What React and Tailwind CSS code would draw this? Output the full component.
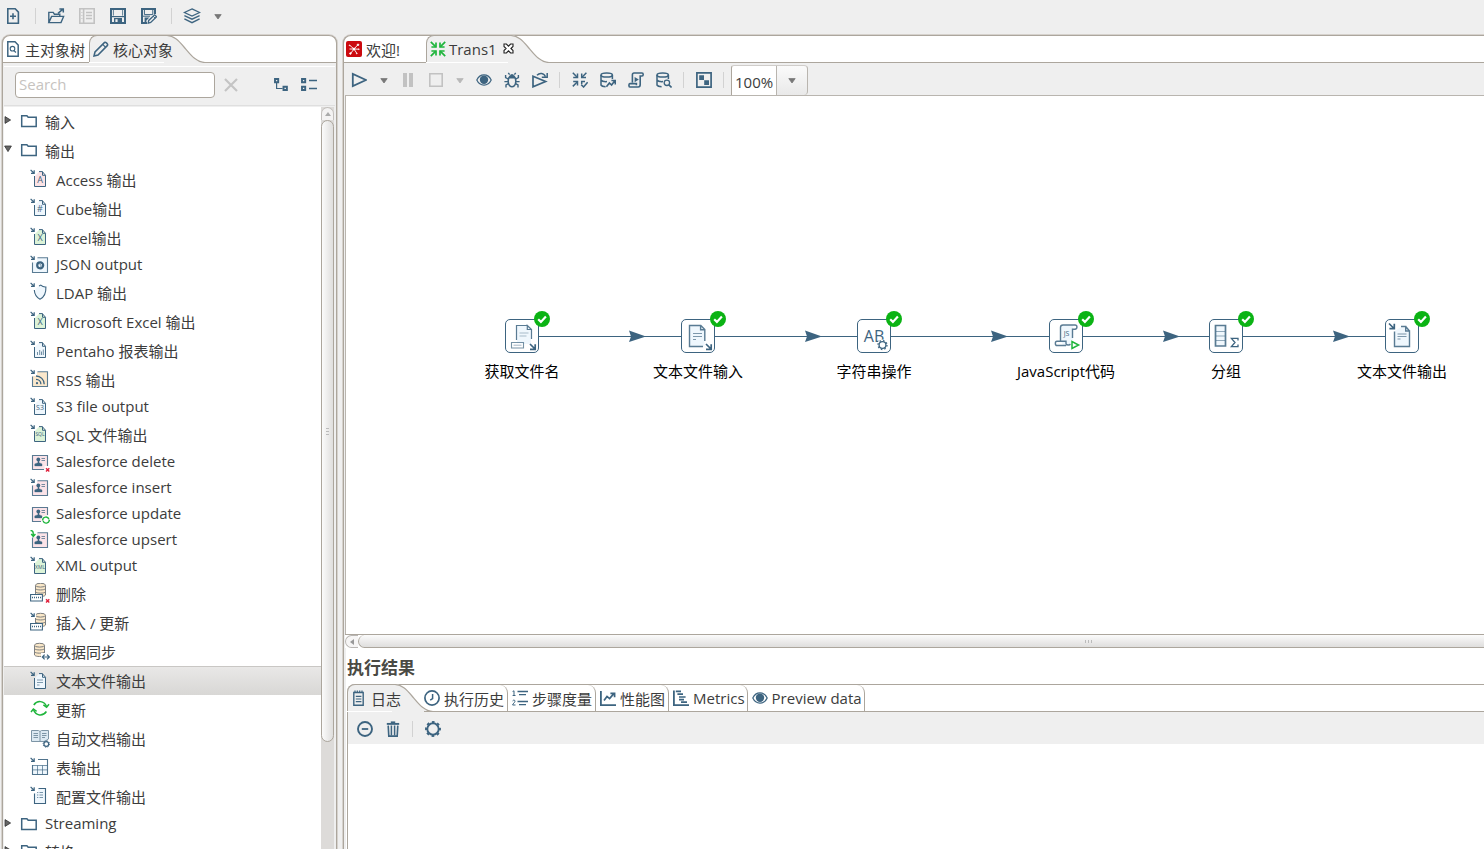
import React from "react";

const INK = "#3d6480";
const PALE = "#eff7fd";
const GREEN = "#1fb53c";

function Svg({ w = 16, h = 16, children, className = "" }) {
  return (
    <svg
      width={w}
      height={h}
      viewBox={`0 0 ${w} ${h}`}
      fill="none"
      stroke={INK}
      strokeWidth="1.6"
      className={`shrink-0 ${className}`}
      aria-hidden="true"
    >
      {children}
    </svg>
  );
}

/* ---------- toolbar icons ---------- */

const NewIcon = () => (
  <Svg>
    <path d="M2.8.8h7.4l3.2 3.3v11.1H2.8z" />
    <path d="M5 8.2h6M8 5.2v6" />
  </Svg>
);
const OpenIcon = () => (
  <Svg w={18}>
    <path d="M1.8 14.6V4.4h4.4l1.2 1.8h5.4v2.2M1.8 14.6l2.8-6.2h12l-2.6 6.2z" strokeWidth="1.4" />
    <path d="M11 5.4l4.6-4M12.4.9h3.9v3.6" strokeWidth="1.5" />
  </Svg>
);
const ListIcon = () => (
  <Svg>
    <g stroke="#c2c2c2">
      <path d="M.8.8h14.4v14.4H.8zM4.6 1v14" />
      <path d="M7 4.5h6M7 7.5h6M7 10.5h6" strokeWidth="1.3" />
      <path d="M2.4 4.5h1M2.4 7.5h1M2.4 10.5h1" strokeWidth="1" />
    </g>
  </Svg>
);
const SaveIcon = () => (
  <Svg>
    <path d="M1 1h14v14H1z" strokeWidth="2" />
    <path d="M2 8.6h12" strokeWidth="1.2" />
    <path d="M3.4 2v5.6M12.6 2v5.6" strokeWidth=".8" />
    <path d="M4 10h8v5H4z" fill={INK} stroke="none" />
    <path d="M5.4 11.2h2.2v2.8H5.4z" fill="#efefef" stroke="none" />
  </Svg>
);
const SaveAsIcon = () => (
  <Svg>
    <path d="M14 6V1H1v14h5" strokeWidth="2" />
    <path d="M3.4 2v4.6h8.4V2M1 8.2h8" strokeWidth="1" />
    <path d="M3.6 9.6h4.8l-3 3v2.8H3.6z" fill={INK} stroke="none" />
    <path d="M7.2 15.2l.5-2.8 6-5.6 1.9 2-5.9 5.7z" fill="#efefef" strokeWidth="1.3" />
    <path d="M12.2 8.2l1.9 2" strokeWidth="1" />
  </Svg>
);
const LayersIcon = () => (
  <Svg w={18}>
    <g strokeWidth="1.3">
      <path d="M9 .9l7.6 3.6L9 8.1 1.4 4.5z" />
      <path d="M1.4 7.6L9 11.2l7.6-3.6M1.4 10.9L9 14.7l7.6-3.8" />
    </g>
  </Svg>
);
const Caret = ({ color = "#777" }) => (
  <Svg w={8} h={6} className="mt-px">
    <path d="M.8.6h6.4L4 5z" fill={color} stroke={color} strokeWidth=".8" />
  </Svg>
);
const Play = () => (
  <Svg>
    <path d="M1.8 1.9v12.2L15 8z" strokeWidth="1.8" />
  </Svg>
);
const Pause = () => (
  <Svg>
    <path d="M3 1h4v14H3zM9 1h4v14H9z" fill="#c2c2c2" stroke="none" />
  </Svg>
);
const Stop = () => (
  <Svg>
    <path d="M1.8 1.8h12.4v12.4H1.8z" stroke="#c2c2c2" strokeWidth="1.6" />
  </Svg>
);
const Eye = () => (
  <Svg>
    <path d="M.8 8C2.4 4.6 5 2.9 8 2.9S13.6 4.6 15.200 8C13.6 11.4 11 13.1 8 13.1S2.4 11.4.8 8z" strokeWidth="1.2" />
    <circle cx="8" cy="7.8" r="4.2" fill={INK} stroke="none" />
  </Svg>
);
const Bug = () => (
  <Svg>
    <path d="M5 5.6h6c1 2 1.4 6-.6 8-1.4 1.3-3.4 1.3-4.8 0-2-2-1.6-6-.6-8z" />
    <path d="M5.4 5.200C5.4 1.8 10.6 1.8 10.6 5.200z" fill={INK} strokeWidth="1" />
    <path d="M5.6 2.600L4.3.8M10.4 2.600L11.7.8M4.2 7L1.6 5.600V3M11.8 7l2.6-1.400V3M4 9.600H.4M12 9.600h3.600M4.4 11.600L2 13v2.400M11.6 11.600L14 13v2.400" strokeWidth="1.4" />
  </Svg>
);
const Replay = () => (
  <Svg>
    <path d="M1 4.200v10.600l12.600-5.300z" strokeWidth="1.7" />
    <path d="M5 3.200C7.500.6 12 .8 13.400 4.800" strokeWidth="1.5" />
    <path d="M9.800 5.300h5.400V.9" strokeWidth="1.5" />
  </Svg>
);
const Verify = () => (
  <Svg>
    <g strokeWidth="1.5">
      <path d="M.8.8l4.4 4.4M14.4.8L10 5.2M.8 14.4L5.2 10" />
      <path d="M5.5 1.4v4.1H1.2M9.7 1.4v4.1H14M5.5 13.6v-4H1.2M9.7 12v-2.400H13" />
      <path d="M9.200 12.600l2.400 2.400 4-4.800" />
    </g>
  </Svg>
);
const DbPath = () => (
  <>
    <ellipse cx="6.7" cy="3" rx="5.7" ry="2.1" />
    <path d="M1 3v10c.6 1 2.4 1.6 4.6 1.7M12.4 3v4M1 8c.8 1.2 3 1.8 6 1.6" />
  </>
);
const DbImpact = () => (
  <Svg>
    <g strokeWidth="1.5"><DbPath /></g>
    <path d="M6.4 14.8l3-3.8 2.2 2 3-4M11.4 8.500h3.900v4" />
  </Svg>
);
const SqlScript = () => (
  <Svg>
    <path d="M4.4 10.600V2.800C4.400 1.600 5 1 6 1h8c1.600 0 1.600 3 0 3h-1.800v8.600c0 1.600-.8 2.400-2 2.400H1.800C.6 15 .6 11.600 1.800 11.600h6.600v1.600" />
    <path d="M6.600 5l4.200 2.600-4.200 2.600z" fill={INK} stroke="none" />
  </Svg>
);
const DbExplore = () => (
  <Svg>
    <g strokeWidth="1.5"><DbPath /></g>
    <circle cx="10.900" cy="10.800" r="2.700" strokeWidth="1.3" />
    <path d="M12.900 12.900l2.700 2.600" />
  </Svg>
);
const ResultsPane = () => (
  <Svg>
    <path d="M.9.9h14.200v14.200H.9z" strokeWidth="1.7" />
    <path d="M3.200 3.200H8V8H3.200zM8.200 8.200H13V13H8.200z" fill={INK} stroke="none" />
  </Svg>
);
const ClearX = () => (
  <Svg>
    <path d="M2 2l12 12M14 2L2 14" stroke="#c4c4c4" strokeWidth="2.2" />
  </Svg>
);
const ExpandTree = () => (
  <Svg>
    <path d="M2 2h3.200v3.200H2zM10.500 9.800h3.400V13h-3.400z" strokeWidth="1.9" />
    <path d="M3.600 6v5.500h6" strokeWidth="1.2" />
  </Svg>
);
const CollapseTree = () => (
  <Svg>
    <path d="M1 2h3.200v3.200H1zM1 9.800h3.200V13H1z" strokeWidth="1.9" />
    <path d="M8 3.600h8M8 11.400h8" strokeWidth="1.5" />
  </Svg>
);

/* ---------- tab icons ---------- */

const DocSearch = () => (
  <Svg w={12}>
    <path d="M.8.8h7.2l3.2 3.3v11.1H.8z" strokeWidth="1.5" />
    <circle cx="5.500" cy="7.700" r="2.300" strokeWidth="1.1" />
    <path d="M7.100 9.600l1.800 1.900" strokeWidth="1.3" />
  </Svg>
);
const Pencil = () => (
  <Svg>
    <path d="M1 15l1-4L11.600 1.400c.8-.8 3.800 1.800 2.900 3L5 14z" strokeWidth="1.5" />
    <path d="M9.700 3.400l3 3" strokeWidth="1.2" />
  </Svg>
);
const Welcome = () => (
  <Svg>
    <rect width="16" height="16" rx="2" fill="#cb0a0f" stroke="none" />
    <g stroke="#fff" strokeWidth=".9">
      <path d="M8 8L4 4.500M8 8l3.700-4M8 8l4.500.2M8 8l2.600 4M8 8l-3 4M8 8H3.500" />
      <circle cx="8" cy="8" r="1" fill="#fff" />
      <circle cx="12" cy="3.800" r=".8" fill="#fff" />
      <circle cx="4.400" cy="12.500" r=".8" fill="#fff" />
      <circle cx="3.600" cy="4.300" r=".4" fill="#fff" />
      <circle cx="12.800" cy="8.200" r=".4" fill="#fff" />
      <circle cx="10.800" cy="12.500" r=".4" fill="#fff" />
    </g>
  </Svg>
);
const TransIcon = () => (
  <Svg>
    <g stroke={GREEN} strokeWidth="1.7">
      <path d="M.8.8l5 5M15.200.8l-5 5M.8 15.200l5-5M15.200 15.200l-5-5" />
      <path d="M6 1.600V6H1.400M10 1.600V6h4.600M6 14.400V10H1.400M10 14.400V10h4.600" />
    </g>
  </Svg>
);
const CloseIcon = () => (
  <Svg w={11} h={11}>
    <path d="M1 1h2.400l2.100 2.200L7.600 1H10v2.400L7.900 5.500 10 7.600V10H7.600L5.500 7.800 3.400 10H1V7.600l2.100-2.100L1 3.400z" stroke="#222" strokeWidth="1.1" fill="#fff" />
  </Svg>
);
const LogIcon = () => (
  <Svg w={14}>
    <path d="M1.800 2.500h9.400v12.700H1.800z" strokeWidth="1.4" />
    <path d="M3 .5v2.600M5.300.5v2.600M7.700.5v2.600M10 .5v2.600" strokeWidth="1.2" />
    <path d="M3.800 6.400h5.600M3.800 9h5.600M3.800 11.600h5.600" strokeWidth="1.2" />
  </Svg>
);
const Clock = () => (
  <Svg>
    <circle cx="8" cy="8" r="7.100" strokeWidth="1.7" />
    <path d="M8.600 4v4.600l-2.400 1.600" strokeWidth="1.5" />
  </Svg>
);
const Steps = () => (
  <Svg>
    <path d="M5.500 1.500H16M7 4.600h7M5.500 11.500H16M7 14.600h7" strokeWidth="1.3" />
    <path d="M.6 1.500L2 .8v4.800M.6 5.500h2.900M.6 10.900c.6-1.200 2.600-1 2.400.4C2.800 12.600.8 13.600.6 15h2.900" strokeWidth="1" />
  </Svg>
);
const Perf = () => (
  <Svg>
    <path d="M.9 1v14.100H16" strokeWidth="1.8" />
    <path d="M4 10.400l3-4 2.600 2.200 4.200-5M10.400 3.400h4.200v3.800" strokeWidth="1.7" />
  </Svg>
);
const MetricsIcon = () => (
  <Svg>
    <path d="M.9.500v14.600H16" strokeWidth="1.8" />
    <path d="M2.800 1.400h5.200M4.400 4.200h5.600M6 7h6.600M6 9.600h5M8 12.200h6" strokeWidth="1.7" />
  </Svg>
);
const MinusCircle = () => (
  <Svg>
    <circle cx="8" cy="8" r="7" strokeWidth="1.9" />
    <path d="M4.800 8h6.400" strokeWidth="1.8" />
  </Svg>
);
const Trash = () => (
  <Svg>
    <path d="M1.800 2.900h12.400" strokeWidth="1.9" />
    <path d="M5.800 1.200h4.400" />
    <path d="M3.200 4.600l.6 10.500h8.400l.6-10.500" />
    <path d="M6.400 4.600v10M9.600 4.600v10" strokeWidth="1.5" />
  </Svg>
);
const Gear = () => (
  <Svg>
    <circle cx="8" cy="8" r="5.700" strokeWidth="1.900" />
    <circle cx="8" cy="8" r="7" strokeWidth="1.900" strokeDasharray="2.700 2.800" strokeDashoffset="1.350" />
  </Svg>
);

/* ---------- tree icons ---------- */

const Folder = () => (
  <Svg w={18} h={14} className="mb-px">
    <path d="M1.700 12.500V1.700h5.200l1.300 1.500h8v9.300z" strokeWidth="1.5" />
  </Svg>
);
const InArrow = () => <path d="M.6.800l3.200 3.200M4.200 1.200v3.200H1" strokeWidth="1.2" />;
const Cross = () => <path d="M16 16.200l3.300 3.300M19.300 16.200L16 19.500" stroke="#e0213c" strokeWidth="1.4" />;
const Doc = ({ fill = PALE, children }) => (
  <>
    <path d="M5 7l4-4.300h2.600L15.400 6v11.500H5z" fill={fill} stroke="none" />
    <path d="M4.500 7v10.500h11V6.300h-3V2.600H9M12.500 2.800l3 3.500" strokeWidth="1" />
    <InArrow />
    {children}
  </>
);
const Glyph = ({ children, size = 9, y = 14 }) => (
  <text x="10" y={y} fontSize={size} textAnchor="middle" fill={INK} stroke="none" fontFamily="Open Sans, sans-serif">
    {children}
  </text>
);
const Square = ({ fill, children }) => (
  <>
    <path d="M3 7h4V3h10.500v14.500H3z" fill={fill} stroke="none" />
    <path d="M7.500 2.700h10v14.800h-15V7.500" strokeWidth="1.1" opacity=".85" />
    {children}
  </>
);
const Person = () => (
  <>
    <circle cx="8.300" cy="7.500" r="1.900" fill={INK} stroke="none" />
    <path d="M8 8.500h1v2.200l3 1.200v2H4.800v-2L8 10.700z" fill={INK} strokeWidth=".4" />
    <path d="M11.500 6.500H15M11.500 8.500H15" strokeWidth="1" opacity=".7" />
  </>
);
const Cylinder = ({ x = 0, y = 0 }) => (
  <g transform={`translate(${x} ${y})`} stroke="#7d7f80" strokeWidth="1">
    <path d="M5.500 3.500v9.500c1 2 9 2 10 0V3.500z" fill="#fbe8c8" />
    <ellipse cx="10.500" cy="3.200" rx="5" ry="1.900" fill="#fbe8c8" />
    <path d="M5.500 6.600c1 1.800 9 1.800 10 0M5.500 9.800c1 1.800 9 1.800 10 0" />
  </g>
);
const DashBox = () => (
  <>
    <path d="M.6 11.500h11.800v6.500H.6z" fill="#fff" strokeWidth="1.1" />
    <path d="M2 14.600h9.200" strokeWidth="1.5" strokeDasharray="1 1" />
  </>
);

const GLYPHS = {
  access: <Doc fill="#fbe3e6"><Glyph>A</Glyph></Doc>,
  cube: <Doc><Glyph>#</Glyph></Doc>,
  excel: <Doc fill="#dcf3d8"><Glyph>X</Glyph></Doc>,
  s3: <Doc><Glyph size={7} y={13}>S3</Glyph></Doc>,
  sql: <Doc fill="#dcf3d8"><Glyph size={5} y={12}>SQL</Glyph></Doc>,
  xml: <Doc fill="#dcf3d8"><Glyph size={5} y={13}>XML</Glyph></Doc>,
  text: <Doc><path d="M7 9h6M7 11.500h6M7 14h2.500" strokeWidth=".9" opacity=".7" /></Doc>,
  report: <Doc><path d="M7.500 15v-3M9.700 15v-5M11.500 15v-3.500M13.300 15V9.500" strokeWidth=".9" opacity=".8" /></Doc>,
  json: (
    <Square fill={PALE}>
      <circle cx="10.200" cy="10.300" r="3" strokeWidth="2.200" />
      <path d="M9.500 8.800l1.400 1.400v2" strokeWidth=".8" />
      <InArrow />
    </Square>
  ),
  ldap: (
    <>
      <path d="M5.500 7C8 5 9 3.500 10 3l5.500 1.500v4c0 4-2.500 7-5.500 8.500-2.500-1.500-4.500-4-4.500-10z" fill={PALE} stroke="none" />
      <path d="M4.300 8c.3 4.500 2.600 7.600 5.700 9.200 3.600-1.700 6.200-5 5.900-12.200-1.800.2-3.400-.3-5.100-1.900L9 4" strokeWidth="1.1" />
      <InArrow />
    </>
  ),
  rss: (
    <Square fill="#fbe8cc">
      <circle cx="7" cy="14.200" r="1.100" fill={INK} stroke="none" />
      <path d="M6 10.300c2.800 0 4.900 2 4.900 4.900M6 7c4.600 0 8.200 3.600 8.200 8.200" strokeWidth="1.300" />
      <InArrow />
    </Square>
  ),
  sfDelete: (
    <>
      <path d="M2.600 3.500h15V14h-3v3.500h-12z" fill="#fbe3e8" stroke="none" />
      <path d="M17.500 14V3.500h-15v14H14" strokeWidth="1.1" opacity=".85" />
      <Person />
      <Cross />
    </>
  ),
  sfInsert: <Square fill="#fbe3e8"><Person /><InArrow /></Square>,
  sfUpdate: (
    <>
      <path d="M2.600 3.500h15V12h-4v5.500h-11z" fill="#fbe3e8" stroke="none" />
      <path d="M17.500 11V3.500h-15v14H11" strokeWidth="1.1" opacity=".85" />
      <Person />
      <circle cx="16" cy="16" r="4.600" fill="#fff" stroke="none" />
      <path d="M12.600 16.500c0-4 5.300-4.600 6.300-1.200M19.400 15.700c0 4-5.300 4.600-6.300 1.200" stroke={GREEN} strokeWidth="1.4" />
    </>
  ),
  sfUpsert: (
    <Square fill="#fbe3e8">
      <Person />
      <path d="M.5.600C3 .4 3.300 2 3.300 5.500M1.200 4l2.100 2.400L5.400 4" stroke={GREEN} strokeWidth="1.4" />
    </Square>
  ),
  remove: <><Cylinder y={-1} /><DashBox /><Cross /></>,
  insertUpdate: (
    <>
      <Cylinder y={0} />
      <path d="M0 0h6v6H0z" fill="#fff" stroke="none" />
      <DashBox />
      <InArrow />
    </>
  ),
  sync: (
    <>
      <Cylinder x={-1} y={1} />
      <path d="M11 12h9v7h-9z" fill="#fff" stroke="none" />
      <path d="M12.300 16h7M14.600 13.600L12.300 16l2.300 2.400M17 13.600l2.300 2.400-2.300 2.400" strokeWidth="1.2" />
    </>
  ),
  update: (
    <g stroke={GREEN} strokeWidth="1.500">
      <path d="M3.800 6c3.400-5 10.400-4.400 12.600 1.200M16.400 12.500c-3.400 5-10.600 4.500-12.800-1.400" />
      <path d="M13.400 5.800l3.200 2.500L19 5.200M1 13l2.400-3 3.200 2.300" />
    </g>
  ),
  autodoc: (
    <>
      <path d="M1.500 2.500h7l1.500 1 1.500-1h7V11l-4 2.500h-13zM10 3.500V14" fill="#dce9f2" stroke="#7d95a6" strokeWidth="1" />
      <path d="M3.500 5.500H8M3.500 7.500H8M3.500 9.500H8M12 5.500h4.500M12 7.500h4.500M12 9.500h3" stroke="#7d95a6" strokeWidth="1" />
      <circle cx="16.300" cy="16" r="2.400" fill="#fff" strokeWidth="1.200" />
      <circle cx="16.300" cy="16" r="3.200" strokeWidth="1" strokeDasharray="1.200 1.300" />
    </>
  ),
  table: (
    <>
      <path d="M3 8h14.500v9.500H3z" fill={PALE} stroke="none" />
      <path d="M2.500 8.500h15M2.500 12.900h15M7.500 8.500v9M12.500 8.500v9" strokeWidth=".9" opacity=".75" />
      <path d="M8 2.500h9.500v15h-15V8" strokeWidth="1.1" opacity=".9" />
      <InArrow />
    </>
  ),
  config: (
    <>
      <path d="M5 7h3V2.600h7.500v14.900H5z" fill={PALE} stroke="none" />
      <path d="M8.500 2.500h7v15H4.500V7.500" strokeWidth="1.1" />
      <path d="M7 6.500h1.300M9.500 6.500H13M7 9h1.300M9.500 9H13M7 11.500h1.300M9.500 11.500H13" strokeWidth=".9" opacity=".75" />
      <InArrow />
    </>
  ),
};

/* rows without Chinese text are a little shorter */
const TREE = [
  { label: "输入", folder: "closed" },
  { label: "输出", folder: "open" },
  { label: "Access 输出", icon: "access" },
  { label: "Cube输出", icon: "cube" },
  { label: "Excel输出", icon: "excel" },
  { label: "JSON output", icon: "json", short: true },
  { label: "LDAP 输出", icon: "ldap" },
  { label: "Microsoft Excel 输出", icon: "excel" },
  { label: "Pentaho 报表输出", icon: "report" },
  { label: "RSS 输出", icon: "rss" },
  { label: "S3 file output", icon: "s3", short: true },
  { label: "SQL 文件输出", icon: "sql" },
  { label: "Salesforce delete", icon: "sfDelete", short: true },
  { label: "Salesforce insert", icon: "sfInsert", short: true },
  { label: "Salesforce update", icon: "sfUpdate", short: true },
  { label: "Salesforce upsert", icon: "sfUpsert", short: true },
  { label: "XML output", icon: "xml", short: true },
  { label: "删除", icon: "remove" },
  { label: "插入 / 更新", icon: "insertUpdate" },
  { label: "数据同步", icon: "sync" },
  { label: "文本文件输出", icon: "text", selected: true },
  { label: "更新", icon: "update" },
  { label: "自动文档输出", icon: "autodoc" },
  { label: "表输出", icon: "table" },
  { label: "配置文件输出", icon: "config" },
  { label: "Streaming", folder: "closed", short: true },
  { label: "转换", folder: "closed" },
];

function TreeRow({ item }) {
  const height = item.short ? "h-[26px]" : "h-[29px]";
  const textShift = item.short ? "pb-[2px]" : "";
  const look = item.selected
    ? "border-t border-[#c9c7c4] bg-linear-to-b from-[#e9e8e7] to-[#d8d7d5]"
    : "";
  return (
    <li>
      <button
        type="button"
        className={`flex w-full items-center text-left whitespace-nowrap ${height} ${look} ${item.folder ? "" : "gap-[6px] pl-[26px]"}`}
      >
        {item.folder ? (
          <>
            <span className="mb-[3px] flex w-4">
              <Svg w={8} h={8}>
                <path
                  d={item.folder === "open" ? "M.6 1h6.800L4 6.600z" : "M1 .6v6.800L6.600 4z"}
                  fill="#666"
                  stroke="#333"
                  strokeWidth=".8"
                />
              </Svg>
            </span>
            <Folder />
            <span className={`pl-[7px] ${textShift}`}>{item.label}</span>
          </>
        ) : (
          <>
            <Svg w={20} h={20} className={item.short ? "" : "mb-px"}>{GLYPHS[item.icon]}</Svg>
            <span className={textShift}>{item.label}</span>
          </>
        )}
      </button>
    </li>
  );
}

/* ---------- shared chrome ---------- */

function Tool({ label, width = "w-7", disabled, children }) {
  return (
    <button type="button" aria-label={label} disabled={disabled} className={`flex h-7 shrink-0 items-center justify-center ${width}`}>
      {children}
    </button>
  );
}

const Divider = ({ className }) => <span className={`h-4 w-px shrink-0 bg-[#d2d2d2] ${className}`} />;

function ActiveTab({ className = "", children }) {
  return (
    <div role="tab" aria-selected="true" tabIndex={0} className={`relative flex h-full shrink-0 items-center whitespace-nowrap ${className}`}>
      <span className="absolute inset-y-0 right-[41px] left-0 rounded-tl-lg border-t border-l border-[#aca69d] bg-[#efefef]" />
      <Svg w={41} h={28} className="absolute top-0 right-0">
        <path d="M0 0h4C10 1 14 5 20 12s12 15 21 15.500V28H0z" fill="#efefef" stroke="none" />
        <path d="M0 .5h3C10 1 14 5 20 12s12 15.500 21 15.500" stroke="#aca69d" strokeWidth="1.200" />
      </Svg>
      <span className="relative flex items-center">{children}</span>
    </div>
  );
}

function Tab({ className = "", children }) {
  return (
    <button type="button" role="tab" aria-selected="false" className={`flex h-full shrink-0 items-center border-b border-[#aca69d] whitespace-nowrap ${className}`}>
      {children}
    </button>
  );
}

/* ---------- canvas ---------- */

const OutArrow = () => <path d="M25 25l5 5M30.200 25.200v5.200H25" strokeWidth="1.700" />;

const STEP_ART = {
  files: (
    <>
      <path d="M12 6.500h10l4 4V25H12z" fill={PALE} stroke="none" />
      <path d="M11.500 21V6.500h11M26.500 20v-9.500h-4.200V6.500l4.200 4" strokeWidth="1.200" opacity=".85" />
      <path d="M14.500 14h9M14.500 17h7" strokeWidth=".8" opacity=".5" />
      <path d="M6.500 23.500h12v5.500h-12z" fill="#fff" strokeWidth="1.100" opacity=".7" />
      <path d="M8.500 26.200h8" strokeWidth=".8" opacity=".6" />
      <OutArrow />
    </>
  ),
  textIn: (
    <>
      <path d="M8.500 6.500h11l4 4v17h-15z" fill={PALE} stroke="none" />
      <path d="M22 27.500H8.500v-21h11.300l4 4V22M19.600 6.500v4.200h4.200" strokeWidth="1.400" opacity=".85" />
      <path d="M12 14.500h9M12 17.500h9M12 20.500h3" strokeWidth="1" opacity=".65" />
      <path d="M24 23h8v9h-8z" fill="#fff" stroke="none" />
      <OutArrow />
    </>
  ),
  string: (
    <>
      <text x="17" y="23" fontSize="16" textAnchor="middle" fill={INK} stroke="none" fontFamily="Open Sans, sans-serif">AB</text>
      <circle cx="25.500" cy="26" r="5.500" fill="#fff" stroke="none" />
      <circle cx="25.500" cy="26" r="3.400" strokeWidth="1.300" />
      <circle cx="25.500" cy="26" r="4.500" strokeWidth="1.300" strokeDasharray="1.500 2.030" />
    </>
  ),
  script: (
    <>
      <path d="M12 22V8.500C12 7 13 6 14.500 6H24v20H14z" fill={PALE} stroke="none" />
      <path d="M11.500 21.500V8.600C11.500 7 12.500 6 14 6h12c2.600 0 2.600 4.200 0 4.200h-2.500V19M17 26.500H8c-2.200 0-2.200-4.200 0-4.200h9v2.200c0 2 4 2 4.200.3" strokeWidth="1.400" opacity=".85" />
      <text x="17.500" y="17" fontSize="7" textAnchor="middle" fill={INK} stroke="none" fontFamily="Open Sans, sans-serif">JS</text>
      <path d="M22 21h9v10h-9z" fill="#fff" stroke="none" />
      <path d="M23 22.500v7l6.600-3.500z" stroke={GREEN} strokeWidth="1.500" />
    </>
  ),
  group: (
    <>
      <path d="M6.500 6.500h10v20.500h-10z" fill={PALE} strokeWidth="1.700" opacity=".85" />
      <path d="M7 12.500h9M7 17h9M7 21.500h9" strokeWidth=".9" opacity=".6" />
      <path d="M29 21.500V19.300h-6.600l3.600 4.200-3.600 4.100H29v-2.200" strokeWidth="1.300" />
    </>
  ),
  textOut: (
    <>
      <path d="M10 12l5-3.500h7l2.500 3v16H10z" fill={PALE} stroke="none" />
      <path d="M9.500 12.500v15h15V12h-3.800V7.500H16M20.700 7.500l3.800 4.500" strokeWidth="1.400" opacity=".85" />
      <path d="M12.500 15h9M12.500 17.500h9M12.500 20h3" strokeWidth="1" opacity=".65" />
      <path d="M4 4.500l5 5M9.300 4.700v5H4.400" strokeWidth="1.700" />
    </>
  ),
};

function Step({ place, art, label }) {
  return (
    <div className={`absolute top-[223px] flex w-[120px] flex-col items-center ${place}`}>
      <button type="button" aria-label={label} className="relative rounded-[5px] border border-[#3d6480] bg-white">
        <Svg w={32} h={32}><g transform="translate(-1 -1)">{STEP_ART[art]}</g></Svg>
        <Svg className="absolute -top-[9px] -right-[12px]">
          <circle cx="8" cy="8" r="8" fill="#0bb314" stroke="none" />
          <path d="M4.200 8.300l2.700 2.600 5-5.300" stroke="#fff" strokeWidth="2.200" />
        </Svg>
      </button>
      <span className="pt-[7px] leading-[22px] whitespace-nowrap text-black">{label}</span>
    </div>
  );
}

function Hop({ place, arrow }) {
  return (
    <span className={`absolute top-[240px] h-px bg-[#3d6480] ${place}`}>
      <Svg w={17} h={12} className={`absolute -top-[6px] ${arrow}`}>
        <path d="M0 .5L17 6.500 0 12l2-5.500z" fill={INK} stroke="none" />
      </Svg>
    </span>
  );
}

export default function App() {
  return (
    <div className="flex h-screen flex-col overflow-hidden bg-[#efefef] font-['Open_Sans','Noto_Sans_CJK_SC',sans-serif] text-[15px] leading-5 text-[#3c3c3c]">
      <header className="flex h-[35px] shrink-0 items-center pb-[3px]">
        <Tool label="新建" width="w-[26px]"><NewIcon /></Tool>
        <Divider className="mr-1 ml-[9px]" />
        <Tool label="打开" width="w-[31px]"><OpenIcon /></Tool>
        <Tool label="资源库" width="w-[31px]" disabled><ListIcon /></Tool>
        <Tool label="保存" width="w-[31px]"><SaveIcon /></Tool>
        <Tool label="另存为" width="w-[31px]"><SaveAsIcon /></Tool>
        <Divider className="mr-1 ml-[7px]" />
        <Tool label="视图" width="w-8"><LayersIcon /></Tool>
        <Tool label="视图菜单" width="w-5"><Caret /></Tool>
      </header>

      <main className="flex min-h-0 flex-1 gap-[6px] pl-[2px]">
        <aside className="flex w-[335px] shrink-0 flex-col rounded-t-lg border-x border-[#aca69d] shadow-[0_0_0_1px_#d6d2cd]">
          <div role="tablist" className="-mx-px flex h-7 shrink-0 overflow-hidden rounded-t-lg border-x border-t border-[#aca69d] bg-white">
            <Tab className="gap-[6px] pr-1 pl-1"><DocSearch /><span className="pt-[2px]">主对象树</span></Tab>
            <ActiveTab className="-mt-px pr-[32px] pl-[4px]"><Pencil /><span className="pt-[2px] pl-1">核心对象</span></ActiveTab>
            <span className="flex-1 border-b border-[#aca69d]" />
          </div>

          <div className="mx-px mt-[3px] flex h-10 shrink-0 items-center border-t border-b border-t-white border-b-[#dfdfdf] pb-[2px] pl-[11px]">
            <input
              type="text"
              aria-label="Search"
              placeholder="Search"
              className="h-[26px] w-[200px] rounded-[4px] border border-[#aca69d] bg-white px-[3px] pb-[2px] placeholder:text-[#c6c3c0]"
            />
            <Tool label="清除" width="w-8"><ClearX /></Tool>
            <span className="w-5" />
            <Tool label="展开"><ExpandTree /></Tool>
            <Tool label="收起"><CollapseTree /></Tool>
          </div>

          <div className="mt-px mr-[2px] ml-px flex min-h-0 flex-1 bg-white">
            <ul className="min-w-0 flex-1 overflow-hidden">
              {TREE.map((item, i) => <TreeRow key={i} item={item} />)}
            </ul>
            <div className="flex w-[13px] shrink-0 flex-col bg-[#dddbd9]">
              <span className="flex h-[13px] shrink-0 items-center justify-center rounded-t-full border border-b-0 border-[#c3c0bd] bg-[#f4f3f3]">
                <Svg w={6} h={4}><path d="M0 4l3-4 3 4z" fill="#aaa" stroke="none" /></Svg>
              </span>
              <span className="mb-[107px] flex flex-1 flex-col items-center justify-center gap-[2px] rounded-full border border-[#aca69d] bg-linear-to-r from-[#fbfbfb] to-[#dfdedd]">
                <span className="h-px w-[3px] bg-[#bbb]" />
                <span className="h-px w-[3px] bg-[#bbb]" />
                <span className="h-px w-[3px] bg-[#bbb]" />
              </span>
            </div>
          </div>
        </aside>

        <section className="flex min-w-0 flex-1 flex-col rounded-tl-lg border-l border-[#aca69d] shadow-[0_0_0_1px_#d6d2cd]">
          <div role="tablist" className="-ml-px flex h-7 shrink-0 rounded-tl-lg border-t border-l border-[#aca69d] bg-white">
            <Tab className="gap-1 pr-[26px] pl-[2px]"><Welcome /><span className="pt-[2px]">欢迎!</span></Tab>
            <ActiveTab className="-mt-px pr-[35px] pl-1">
              <TransIcon />
              <span className="pr-[6px] pl-[3px]">Trans1</span>
              <button type="button" aria-label="关闭"><CloseIcon /></button>
            </ActiveTab>
            <span className="flex-1 border-b border-[#aca69d]" />
          </div>

          <div className="flex h-8 shrink-0 items-center pt-[2px] pl-px">
            <Tool label="运行"><Play /></Tool>
            <Tool label="运行选项" width="w-[21px]"><Caret /></Tool>
            <Tool label="暂停" disabled><Pause /></Tool>
            <Tool label="停止" disabled><Stop /></Tool>
            <Tool label="停止选项" width="w-5" disabled><Caret color="#b8b8b8" /></Tool>
            <Tool label="预览"><Eye /></Tool>
            <Tool label="调试"><Bug /></Tool>
            <Tool label="重放"><Replay /></Tool>
            <Divider className="mr-[6px] ml-[5px]" />
            <Tool label="校验"><Verify /></Tool>
            <Tool label="影响分析"><DbImpact /></Tool>
            <Tool label="生成 SQL"><SqlScript /></Tool>
            <Tool label="浏览数据库"><DbExplore /></Tool>
            <Divider className="mr-[6px] ml-[5px]" />
            <Tool label="显示结果"><ResultsPane /></Tool>
            <Divider className="mr-[7px] ml-[5px]" />
            <input type="text" aria-label="缩放" defaultValue="100%" className="h-full w-[45px] rounded-tl-[3px] border-t border-l border-[#aca69d] border-t-[#d0cdca] bg-white pt-[2px] pl-[3px]" />
            <button type="button" aria-label="缩放选项" className="flex h-full w-8 items-center justify-center rounded-r-[4px] border-x border-t border-[#b9b5af] border-t-[#d0cdca] bg-linear-to-b from-[#fafafa] to-[#e9e9e9]">
              <Caret />
            </button>
          </div>

          <div className="relative ml-px min-h-0 flex-1 overflow-hidden border-t border-l border-[#b9b5af] bg-white">
            <Hop place="left-[193px] w-[142px]" arrow="left-[90px]" />
            <Hop place="left-[369px] w-[142px]" arrow="left-[90px]" />
            <Hop place="left-[545px] w-[158px]" arrow="left-[100px]" />
            <Hop place="left-[737px] w-[126px]" arrow="left-[80px]" />
            <Hop place="left-[897px] w-[142px]" arrow="left-[90px]" />
            <Step place="left-[116px]" art="files" label="获取文件名" />
            <Step place="left-[292px]" art="textIn" label="文本文件输入" />
            <Step place="left-[468px]" art="string" label="字符串操作" />
            <Step place="left-[660px]" art="script" label="JavaScript代码" />
            <Step place="left-[820px]" art="group" label="分组" />
            <Step place="left-[996px]" art="textOut" label="文本文件输出" />
          </div>

          <div className="ml-px flex h-[14px] shrink-0 border-t border-[#aca69d] bg-white">
            <span className="flex w-[13px] items-center justify-center rounded-l-full border border-r-0 border-[#b9b6b3] bg-[#f6f5f5]">
              <Svg w={4} h={6}><path d="M4 0L0 3l4 3z" fill="#999" stroke="none" /></Svg>
            </span>
            <span className="flex flex-1 items-center justify-start gap-[2px] rounded-l-full border border-t-0 border-r-0 border-[#aca69d] bg-linear-to-b from-[#fbfbfb] to-[#dfdedd] pl-[63.7%]">
              <span className="h-[3px] w-px bg-[#bbb]" />
              <span className="h-[3px] w-px bg-[#bbb]" />
              <span className="h-[3px] w-px bg-[#bbb]" />
            </span>
          </div>

          <div className="ml-[2px] flex h-[201px] shrink-0 flex-col bg-white pl-px">
            <h2 className="flex h-9 shrink-0 items-center pt-[3px] text-[17px] font-bold text-[#4a4a44]">执行结果</h2>
            <div role="tablist" className="flex h-7 shrink-0 rounded-tl-lg border-t border-[#aca69d]">
              <ActiveTab className="-mt-px pr-[32px] pl-[5px]"><LogIcon /><span className="pt-[2px] pl-[5px]">日志</span></ActiveTab>
              <Tab className="relative -ml-[9px] gap-1 rounded-tr-lg border-r pr-[3px]"><Clock /><span className="pt-px">执行历史</span></Tab>
              <Tab className="gap-1 rounded-tr-lg border-r pr-[3px] pl-1"><Steps /><span className="pt-px">步骤度量</span></Tab>
              <Tab className="gap-1 rounded-tr-lg border-r pr-[3px] pl-1"><Perf /><span className="pt-px">性能图</span></Tab>
              <Tab className="gap-1 rounded-tr-lg border-r pr-[2px] pl-1"><MetricsIcon /><span>Metrics</span></Tab>
              <Tab className="gap-1 rounded-tr-lg border-r pr-[2px] pl-1"><Eye /><span>Preview data</span></Tab>
              <span className="flex-1 border-b border-[#aca69d]" />
            </div>
            <div className="flex min-h-0 flex-1 flex-col border-l border-[#aca69d]">
              <div className="flex h-8 shrink-0 items-center bg-[#efefef] pt-[2px] pl-[3px]">
                <Tool label="隐藏日志"><MinusCircle /></Tool>
                <Tool label="清空日志"><Trash /></Tool>
                <Divider className="mr-[6px] ml-[5px]" />
                <Tool label="日志设置"><Gear /></Tool>
              </div>
              <textarea aria-label="日志" readOnly className="ml-px min-h-0 flex-1 resize-none bg-white outline-none" />
            </div>
          </div>
        </section>
      </main>
    </div>
  );
}
